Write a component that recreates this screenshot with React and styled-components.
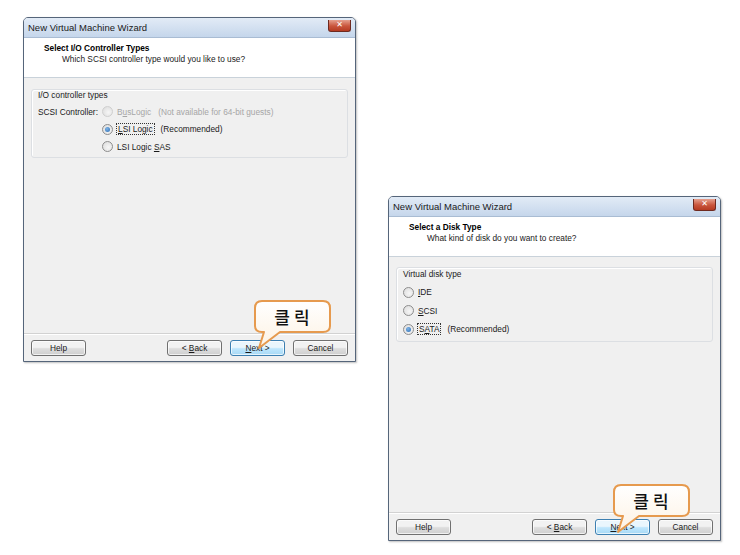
import React from "react";
import styled, { createGlobalStyle } from "styled-components";

const GlobalStyle = createGlobalStyle`
  html, body {
    margin: 0;
    padding: 0;
    background: #ffffff;
  }
  body {
    font-family: "Liberation Sans", "DejaVu Sans", sans-serif;
  }
`;

const Desktop = styled.div`
  position: relative;
  width: 740px;
  height: 555px;
  overflow: hidden;
  background: #ffffff;
`;

const Window = styled.div`
  position: absolute;
  left: ${(p) => p.x}px;
  top: ${(p) => p.y}px;
  width: 333px;
  height: 345px;
  box-sizing: border-box;
  display: flex;
  flex-direction: column;
  border: 1px solid #55657a;
  border-radius: 5px 5px 0 0;
  background: #f0f0f0;
  box-shadow: 1px 1px 2px rgba(0, 0, 0, 0.25);
`;

const TitleBar = styled.div`
  height: 19px;
  flex: none;
  display: flex;
  align-items: center;
  justify-content: space-between;
  padding: 0 4px 0 4px;
  border-radius: 4px 4px 0 0;
  background: linear-gradient(#e2ebf6, #c5d6eb);
  border-bottom: 1px solid #a9bcd3;
  font-size: 9.5px;
  color: #1a1a1a;
`;

const CloseButton = styled.div`
  width: 23px;
  height: 12px;
  margin-top: -4px;
  border: 1px solid #6e2a20;
  border-top: none;
  border-radius: 0 0 3px 3px;
  box-sizing: border-box;
  background: linear-gradient(#e6a08e, #c9553c 55%, #b53b22);
  display: flex;
  align-items: center;
  justify-content: center;
  color: #ffffff;
  font-size: 8px;
  line-height: 1;
`;

const Header = styled.div`
  height: 40px;
  flex: none;
  box-sizing: border-box;
  background: #ffffff;
  border-bottom: 1px solid #c9d2da;
  padding: 5px 0 0 20px;
`;

const HeaderTitle = styled.div`
  font-size: 8.3px;
  font-weight: bold;
  color: #000;
  line-height: 11px;
`;

const HeaderSub = styled.div`
  font-size: 8.3px;
  color: #1a1a1a;
  line-height: 11px;
  padding-left: 18px;
`;

const Body = styled.div`
  flex: 1;
  padding: ${(p) => p.top}px 7px 0 7px;
`;

const Group = styled.div`
  box-sizing: border-box;
  height: ${(p) => p.h}px;
  border: 1px solid #dcdfe3;
  border-radius: 3px;
  box-shadow: inset 1px 1px 0 #ffffff;
  padding: ${(p) => p.pad}px 6px 0 6px;
`;

const GroupLabel = styled.div`
  font-size: 8.3px;
  color: #1a1a1a;
  line-height: 11px;
  margin-bottom: ${(p) => p.gap}px;
`;

const ControllerGrid = styled.div`
  display: grid;
  grid-template-columns: 64px 1fr;
  grid-auto-rows: 17.5px;
  align-items: center;
`;

const FieldLabel = styled.span`
  font-size: 8.3px;
  color: #1a1a1a;
`;

const OptionList = styled.div`
  display: flex;
  flex-direction: column;
`;

const OptionRow = styled.div`
  height: ${(p) => p.h}px;
  display: flex;
  align-items: center;
  font-size: 8.3px;
  color: ${(p) => (p.disabled ? "#a6a6a6" : "#1a1a1a")};
`;

const Radio = styled.span`
  width: 9px;
  height: 9px;
  flex: none;
  border-radius: 50%;
  border: 1px solid ${(p) => (p.disabled ? "#cfcfcf" : "#8d8d8d")};
  background: radial-gradient(circle at 60% 60%, #f6f6f6, #dadada);
  margin-right: 4px;
  display: flex;
  align-items: center;
  justify-content: center;
  &::after {
    content: "";
    display: ${(p) => (p.checked ? "block" : "none")};
    width: 5px;
    height: 5px;
    border-radius: 50%;
    background: radial-gradient(circle at 40% 35%, #7fb4e6, #2a6cb4);
  }
`;

const Focus = styled.span`
  outline: 1px dotted #333;
  outline-offset: 0;
  padding: 0 1px;
`;

const Note = styled.span`
  margin-left: 7px;
`;

const Footer = styled.div`
  height: 28px;
  flex: none;
  box-sizing: border-box;
  border-top: 1px solid #d2d2d2;
  box-shadow: inset 0 1px 0 #ffffff;
  display: flex;
  align-items: center;
  padding: 0 7px;
  gap: 8px;
`;

const Spacer = styled.div`
  flex: 1;
`;

const Button = styled.div`
  width: 55px;
  height: 16px;
  box-sizing: border-box;
  border: 1px solid ${(p) => (p.primary ? "#3c7fb1" : "#707070")};
  border-radius: 3px;
  background: ${(p) =>
    p.primary
      ? "linear-gradient(#eaf6fd 45%, #bee6fd 55%, #a7d9f5)"
      : "linear-gradient(#f2f2f2 45%, #dddddd 55%, #cfcfcf)"};
  box-shadow: inset 0 0 0 1px rgba(255, 255, 255, 0.7);
  display: flex;
  align-items: center;
  justify-content: center;
  font-size: 8.3px;
  color: #1a1a1a;
  white-space: pre;
`;

const Callout = styled.div`
  position: absolute;
  left: ${(p) => p.x}px;
  top: ${(p) => p.y}px;
  width: 78px;
  height: 52px;
`;

const BubbleShape = styled.svg`
  position: absolute;
  left: 0;
  top: 0;
  overflow: visible;
`;

const BubbleText = styled.span`
  position: absolute;
  left: 0;
  top: 0;
  width: 76px;
  height: 33px;
  display: flex;
  align-items: center;
  justify-content: center;
  font-family: "Noto Sans CJK KR", "Noto Sans", sans-serif;
  font-size: 17px;
  font-weight: 500;
  letter-spacing: 4px;
  text-indent: 4px;
  color: #111;
`;

const Bubble = ({ x, y, id }) => (
  <Callout x={x} y={y}>
    <BubbleShape width="78" height="52" viewBox="0 0 78 52">
      <defs>
        <linearGradient id={id} x1="0" y1="0" x2="0" y2="1">
          <stop offset="0" stopColor="#ffffff" />
          <stop offset="1" stopColor="#fdf2e3" />
        </linearGradient>
      </defs>
      <path
        d="M8 1 H69 Q76 1 76 8 V26 Q76 32 69 32 H26 L5 48 L10 32 H8 Q1 32 1 26 V8 Q1 1 8 1 Z"
        fill={`url(#${id})`}
        stroke="#e69a4e"
        strokeWidth="2"
        strokeLinejoin="round"
      />
    </BubbleShape>
    <BubbleText>클릭</BubbleText>
  </Callout>
);

const WizardButtons = () => (
  <Footer>
    <Button>Help</Button>
    <Spacer />
    <Button>
      <span>{"< "}</span>
      <u>B</u>
      <span>ack</span>
    </Button>
    <Button primary>
      <u>N</u>
      <span>{"ext >"}</span>
    </Button>
    <Button>Cancel</Button>
  </Footer>
);

const Title = () => (
  <TitleBar>
    <span>New Virtual Machine Wizard</span>
    <CloseButton>✕</CloseButton>
  </TitleBar>
);

const App = () => (
  <Desktop>
    <GlobalStyle />
    <Window x={23} y={17}>
      <Title />
      <Header>
        <HeaderTitle>Select I/O Controller Types</HeaderTitle>
        <HeaderSub>Which SCSI controller type would you like to use?</HeaderSub>
      </Header>
      <Body top={11}>
        <Group h={69} pad={0}>
          <GroupLabel gap={2}>I/O controller types</GroupLabel>
          <ControllerGrid>
            <FieldLabel>SCSI Controller:</FieldLabel>
            <OptionRow h={17.5} disabled>
              <Radio disabled />
              <span>
                B<u>u</u>sLogic
              </span>
              <Note>(Not available for 64-bit guests)</Note>
            </OptionRow>
            <span />
            <OptionRow h={17.5}>
              <Radio checked />
              <Focus>
                <u>L</u>SI Logic
              </Focus>
              <Note>(Recommended)</Note>
            </OptionRow>
            <span />
            <OptionRow h={17.5}>
              <Radio />
              <span>
                LSI Logic <u>S</u>AS
              </span>
            </OptionRow>
          </ControllerGrid>
        </Group>
      </Body>
      <WizardButtons />
      <Bubble x={230} y={282} id="bubbleA" />
    </Window>

    <Window x={388} y={196}>
      <Title />
      <Header>
        <HeaderTitle>Select a Disk Type</HeaderTitle>
        <HeaderSub>What kind of disk do you want to create?</HeaderSub>
      </Header>
      <Body top={10}>
        <Group h={75} pad={1}>
          <GroupLabel gap={3}>Virtual disk type</GroupLabel>
          <OptionList>
            <OptionRow h={18.5}>
              <Radio />
              <span>
                <u>I</u>DE
              </span>
            </OptionRow>
            <OptionRow h={18.5}>
              <Radio />
              <span>
                <u>S</u>CSI
              </span>
            </OptionRow>
            <OptionRow h={18.5}>
              <Radio checked />
              <Focus>
                S<u>A</u>TA
              </Focus>
              <Note>(Recommended)</Note>
            </OptionRow>
          </OptionList>
        </Group>
      </Body>
      <WizardButtons />
      <Bubble x={224} y={287} id="bubbleB" />
    </Window>
  </Desktop>
);

export default App;
